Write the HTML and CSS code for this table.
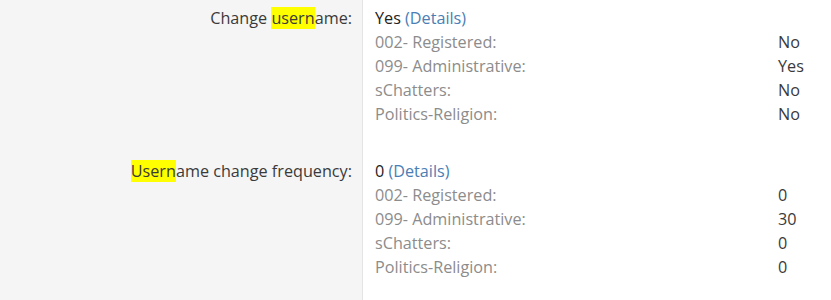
FILE: index.html
```html
<!DOCTYPE html>
<html>
<head>
<meta charset="utf-8">
<link rel="stylesheet" href="styles.css">
</head>
<body>
<div class="form">
  <div class="row">
    <div class="label">Change <mark>usern</mark>ame:</div>
    <div class="value">
      <div class="main">Yes <a href="#">(Details)</a></div>
      <div class="sub"><span class="k">002- Registered:</span><span class="v">No</span></div>
      <div class="sub"><span class="k">099- Administrative:</span><span class="v">Yes</span></div>
      <div class="sub"><span class="k">sChatters:</span><span class="v">No</span></div>
      <div class="sub"><span class="k">Politics-Religion:</span><span class="v">No</span></div>
    </div>
  </div>
  <div class="row">
    <div class="label"><mark>Usern</mark>ame change frequency:</div>
    <div class="value">
      <div class="main">0 <a href="#">(Details)</a></div>
      <div class="sub"><span class="k">002- Registered:</span><span class="v">0</span></div>
      <div class="sub"><span class="k">099- Administrative:</span><span class="v">30</span></div>
      <div class="sub"><span class="k">sChatters:</span><span class="v">0</span></div>
      <div class="sub"><span class="k">Politics-Religion:</span><span class="v">0</span></div>
    </div>
  </div>
</div>
</body>
</html>
```

FILE: styles.css
```css
html, body {
  margin: 0;
  padding: 0;
  background: #fff;
}
body {
  font-family: "Open Sans", "Noto Sans", sans-serif;
  font-size: 16.2px;
  color: #333;
}
.form {
  display: flex;
  flex-direction: column;
  height: 300px;
  background: linear-gradient(to right, #f5f5f5 0, #f5f5f5 362px, #e4e4e4 362px, #e4e4e4 363px, #fff 363px);
}
.row {
  display: grid;
  grid-template-columns: 363px 1fr;
  padding-top: 6px;
  padding-bottom: 27px;
}
.label {
  text-align: right;
  padding-right: 11px;
  line-height: 24px;
  color: #3a3a3a;
}
mark {
  background: #ffff00;
  color: inherit;
}
.value {
  padding-left: 12px;
  line-height: 24px;
}
.main {
  color: #222;
}
a {
  color: #4a7eb4;
  text-decoration: none;
}
.sub {
  display: grid;
  grid-template-columns: 403px 1fr;
}
.k {
  color: #8c8c8c;
}
.v {
  color: #3a3a3a;
}
```
